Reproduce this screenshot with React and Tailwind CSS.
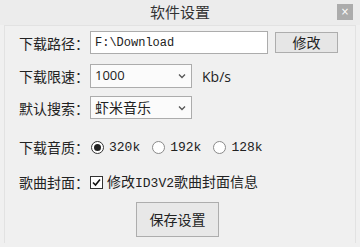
import React from "react";

const cjk = { fontFamily: '"Microsoft YaHei", "Noto Sans CJK SC", sans-serif' };
const mono = { fontFamily: '"Liberation Mono", "Noto Sans CJK SC", monospace' };

function Chevron() {
  return (
    <svg width="8" height="6" viewBox="0 0 8 6" className="shrink-0">
      <path d="M1 1.5 L4 4.5 L7 1.5" fill="none" stroke="#555" strokeWidth="1.3" />
    </svg>
  );
}

function Radio({ checked, label }) {
  return (
    <div className="flex items-center">
      <div className={`w-[13px] h-[13px] rounded-full border flex items-center justify-center bg-white ${checked ? "border-[#333]" : "border-[#8a8a8a]"}`}>
        {checked && <div className="w-[7px] h-[7px] rounded-full bg-[#222]" />}
      </div>
      <span className="ml-[5px] text-[13px] text-[#222] leading-none" style={mono}>{label}</span>
    </div>
  );
}

function Label({ children }) {
  return <div className="w-[71px] shrink-0 text-[14px] text-[#222] leading-none">{children}</div>;
}

export default function App() {
  return (
    <div className="w-[360px] h-[247px] bg-[#f0f0f0] relative overflow-hidden" style={cjk}>
      <div className="h-[25px] flex items-center justify-center text-[15px] text-[#333] bg-[#ececec]">
        软件设置
      </div>
      <div className="absolute right-[7px] top-[4px] w-[16px] h-[16px] bg-[#acacac] flex items-center justify-center text-white text-[10px] leading-none" style={{ fontFamily: '"DejaVu Sans", sans-serif' }}>
        ×
      </div>
      <div className="mx-[4px] h-[218px] border border-b-0 border-[#e2e2e2] pl-[14px] pt-[5px]">
        <div className="flex items-center h-[23px]">
          <Label>下载路径：</Label>
          <div className="w-[178px] h-[23px] bg-white border border-[#acacac] flex items-center pl-[4px] text-[12px] text-[#222]" style={mono}>
            F:\Download
          </div>
          <div className="ml-[7px] w-[63px] h-[21px] bg-[#e6e6e6] border border-[#adadad] flex items-center justify-center text-[14px] text-[#222]">
            修改
          </div>
        </div>
        <div className="flex items-center h-[24px] mt-[10px]">
          <Label>下载限速：</Label>
          <div className="w-[102px] h-[24px] bg-[#fbfbfb] border border-[#acacac] flex items-center justify-between pl-[4px] pr-[5px] text-[13px] text-[#222]" style={{ fontFamily: '"Open Sans", "Noto Sans", sans-serif' }}>
            1000
            <Chevron />
          </div>
          <span className="ml-[10px] text-[14px] text-[#222]" style={{ fontFamily: '"Open Sans", "Noto Sans", sans-serif' }}>Kb/s</span>
        </div>
        <div className="flex items-center h-[23px] mt-[8px]">
          <Label>默认搜索：</Label>
          <div className="w-[102px] h-[23px] bg-[#fbfbfb] border border-[#acacac] flex items-center justify-between pl-[4px] pr-[5px] text-[14px] text-[#222]">
            虾米音乐
            <Chevron />
          </div>
        </div>
        <div className="flex items-center h-[20px] mt-[18px]">
          <Label>下载音质：</Label>
          <div className="ml-[1px] flex items-center gap-[12px]">
            <Radio checked label="320k" />
            <Radio label="192k" />
            <Radio label="128k" />
          </div>
        </div>
        <div className="flex items-center h-[20px] mt-[15px]">
          <Label>歌曲封面：</Label>
          <div className="w-[13px] h-[13px] border border-[#333] bg-white flex items-center justify-center">
            <svg width="11" height="11" viewBox="0 0 11 11">
              <path d="M2 5.5 L4.5 8 L9 2.5" fill="none" stroke="#111" strokeWidth="1.6" />
            </svg>
          </div>
          <span className="ml-[4px] text-[14px] text-[#222] leading-none">
            修改<span style={mono} className="text-[13px]">ID3V2</span>歌曲封面信息
          </span>
        </div>
        <div className="flex mt-[10px] pl-[117px]">
          <div className="w-[83px] h-[35px] bg-[#e8e8e8] border border-[#adadad] flex items-center justify-center text-[14px] text-[#222]">
            保存设置
          </div>
        </div>
      </div>
    </div>
  );
}
